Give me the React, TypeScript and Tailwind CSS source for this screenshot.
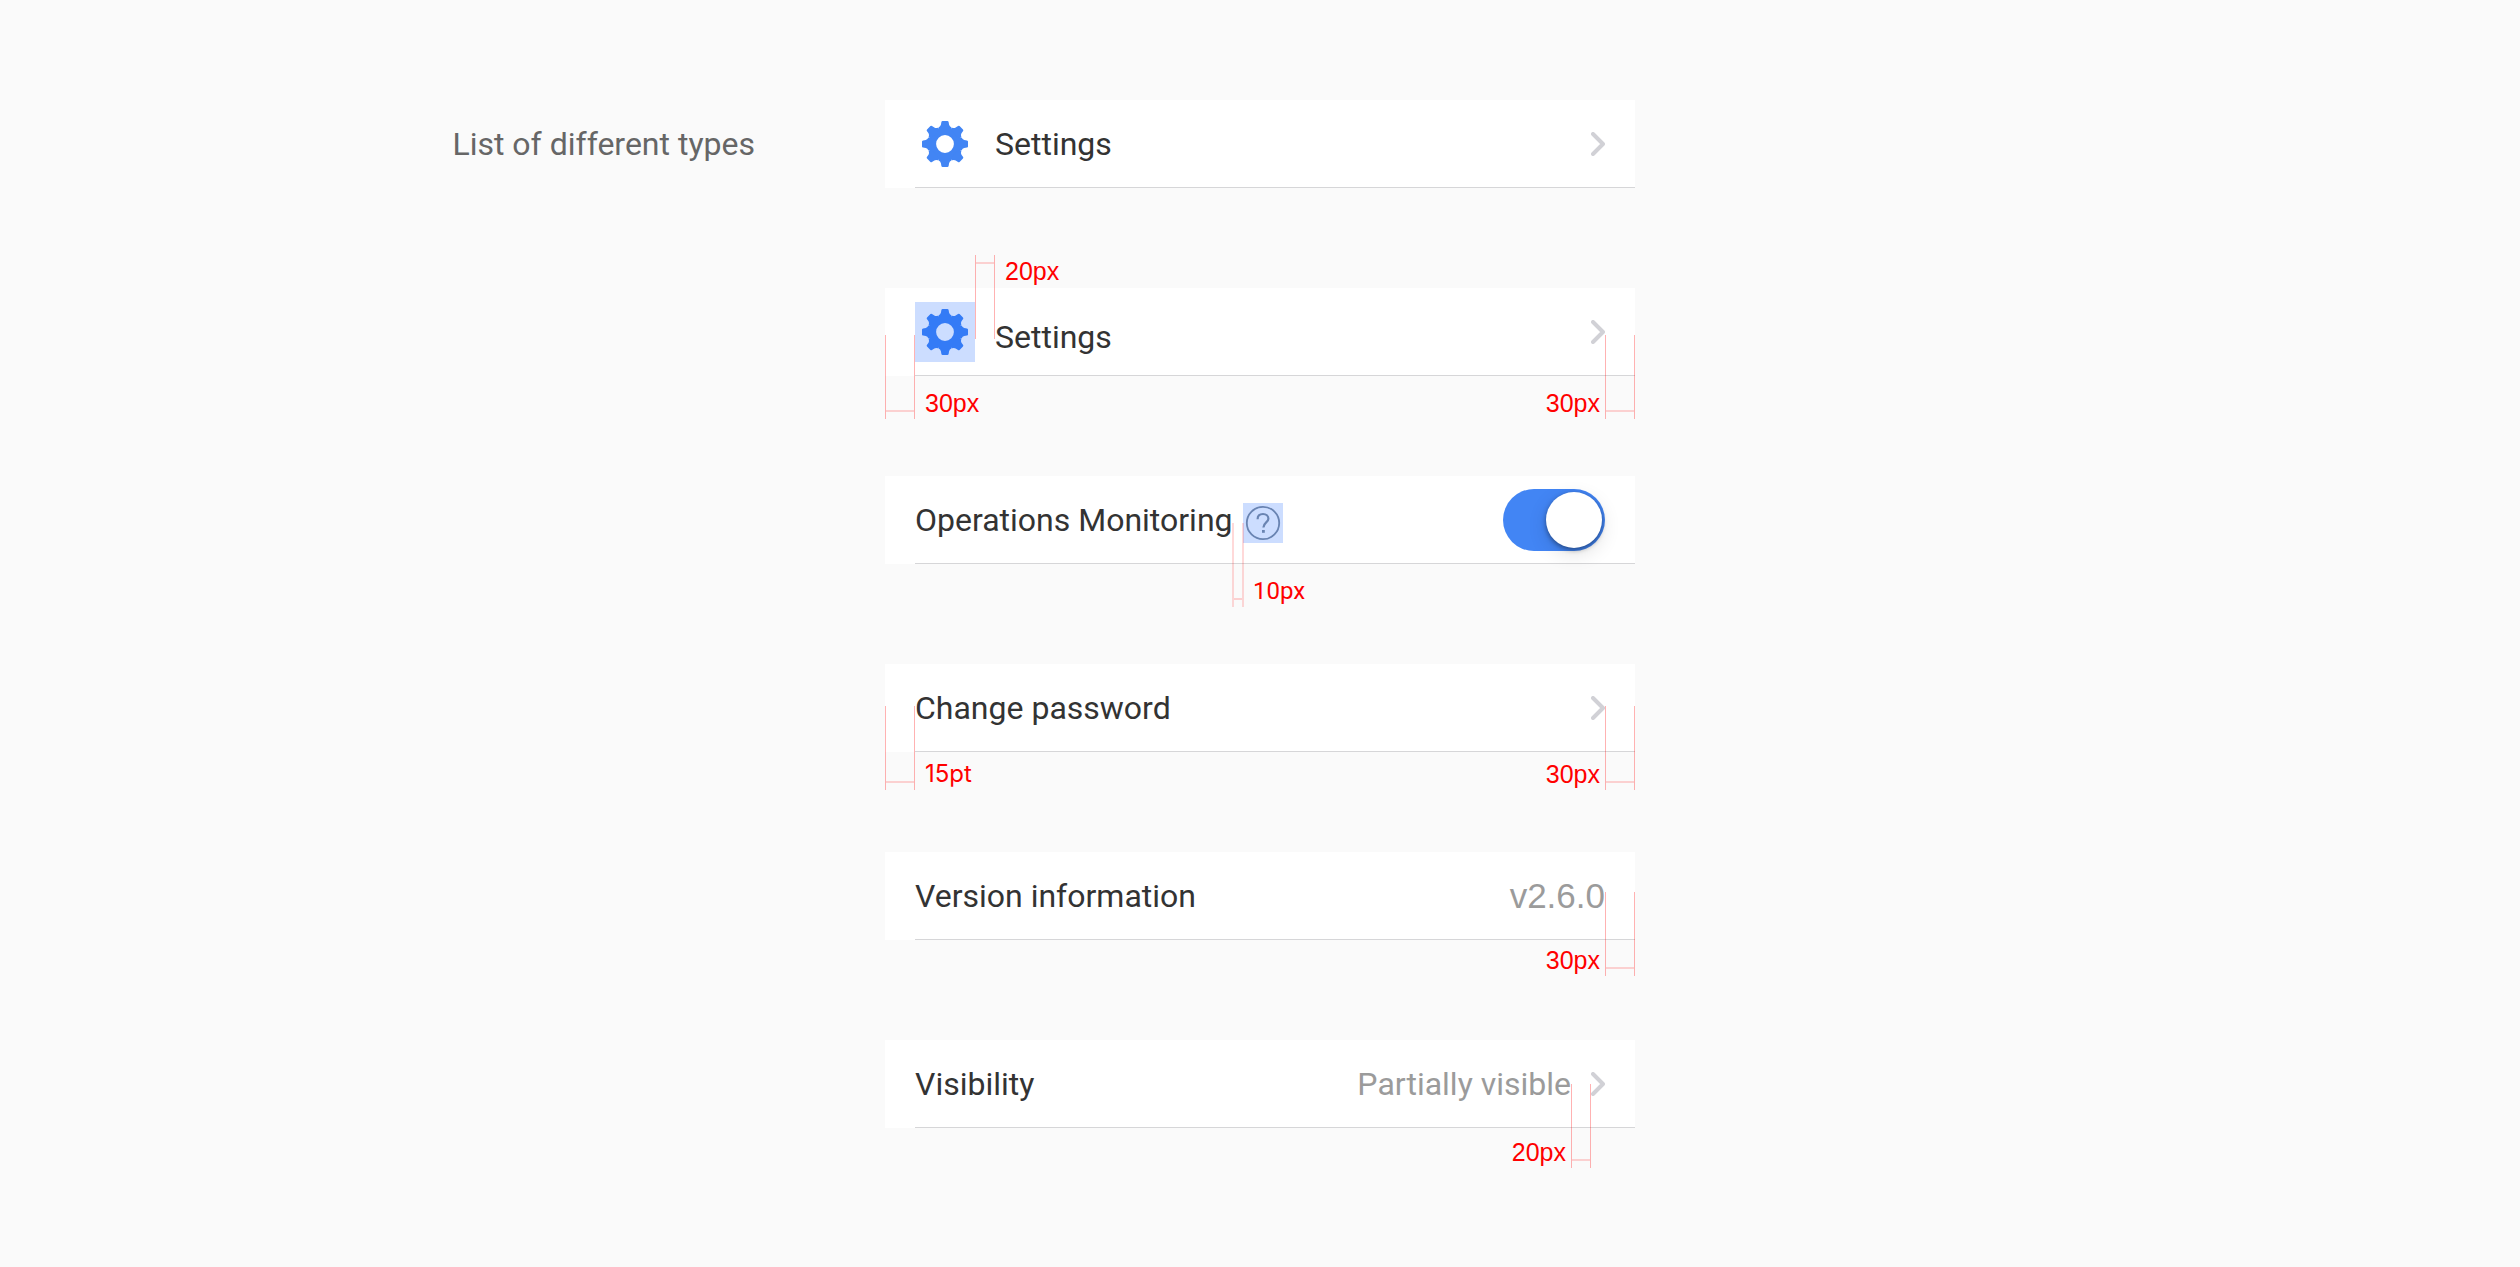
import { useState, type ReactNode } from 'react';

const TOOTH_ANGLES = [0, 45, 90, 135, 180, 225, 270, 315];

function GearIcon() {
  return (
    <svg viewBox="-30 -30 60 60" className="block size-[60px] text-[#4285f4]" fill="currentColor" aria-hidden="true">
      <circle r="12.8" fill="none" stroke="currentColor" strokeWidth="7.8" />
      {TOOTH_ANGLES.map((angle) => (
        <path
          key={angle}
          transform={`rotate(${angle})`}
          d="M-2.4 -23H2.4Q3.4 -23 3.6 -22L4.1 -19.2Q4.5 -17.4 6.5 -16.6L6.3 -14H-6.3L-6.5 -16.6Q-4.5 -17.4 -4.1 -19.2L-3.6 -22Q-3.4 -23 -2.4 -23Z"
        />
      ))}
    </svg>
  );
}

function Chevron() {
  return (
    <svg viewBox="0 0 14 24" className="block h-6 w-3.5 shrink-0" fill="none" aria-hidden="true">
      <path d="M2 2L12 12L2 22" stroke="#d1d1d6" strokeWidth="4" strokeLinecap="round" strokeLinejoin="round" />
    </svg>
  );
}

function HelpIcon() {
  return (
    <svg viewBox="0 0 40 40" className="block size-10" fill="none" stroke="#84909f" aria-hidden="true">
      <circle cx="20" cy="20" r="16.2" strokeWidth="1.8" />
      <path d="M14.6 16.2C14.6 12.9 16.9 11 20 11C23.1 11 25.4 12.9 25.4 15.7C25.4 19.4 20.4 19.6 20.4 24.6" strokeWidth="2.2" />
      <path d="M20.4 27V29.8" strokeWidth="2.8" />
    </svg>
  );
}

/* Blue tint that marks the bounds of an icon */
function Bounds({ children }: { children: ReactNode }) {
  return (
    <span className="relative block shrink-0">
      {children}
      <span className="absolute inset-0 bg-[#0055ff]/20" />
    </span>
  );
}

type MeasureProps = {
  place: string;
  label: string;
  side: 'left' | 'right';
  font?: string;
  line?: string;
  top?: boolean;
};

function Measure({
  place,
  label,
  side,
  font = 'font-["Liberation_Sans",sans-serif] text-[25px]',
  line = 'border-x border-[#ff0000]/30',
  top = false,
}: MeasureProps) {
  return (
    <div className={`pointer-events-none absolute h-[84px] ${line} ${place}`}>
      <span className={`absolute inset-x-0 h-0.5 bg-[#ff0000]/17 ${top ? 'top-[7px]' : 'bottom-[7px]'}`} />
      <span
        className={`absolute leading-6 whitespace-nowrap text-[#ff0000] ${font} ${top ? 'top-1' : 'bottom-1'} ${
          side === 'right' ? 'left-full pl-[11px]' : 'right-full pr-1.5'
        }`}
      >
        {label}
      </span>
    </div>
  );
}

function Row({ children, marks }: { children: ReactNode; marks?: ReactNode }) {
  return (
    <li className="relative bg-white pl-[30px]">
      <div className="flex h-[88px] items-center border-b border-[#d6d6d8] pr-[30px] leading-[50px] text-[#333333]">{children}</div>
      {marks}
    </li>
  );
}

const LINK = 'flex flex-1 items-center justify-between text-left';

export default function App() {
  const [monitoring, setMonitoring] = useState(true);
  return (
    <main className="grid min-h-screen grid-cols-[1fr_minmax(0,750px)_1fr] items-start bg-[#fafafa] py-[100px] font-[Roboto,sans-serif] text-[32px]">
      <h1 className="pr-[130px] text-right leading-[88px] font-normal whitespace-nowrap text-[#666666]">List of different types</h1>
      <ul className="flex flex-col gap-[100px]">
        <Row>
          <a href="#settings" className={LINK}>
            <span className="flex items-center gap-5">
              <GearIcon />
              Settings
            </span>
            <Chevron />
          </a>
        </Row>
        <Row
          marks={
            <>
              <Measure place="-top-[33px] left-[90px] w-5" label="20px" side="right" top />
              <Measure place="top-[47px] left-0 w-[30px]" label="30px" side="right" />
              <Measure place="top-[47px] right-0 w-[30px]" label="30px" side="left" />
            </>
          }
        >
          <a href="#settings-layout" className={LINK}>
            <span className="flex items-end gap-5">
              <Bounds>
                <GearIcon />
              </Bounds>
              Settings
            </span>
            <Chevron />
          </a>
        </Row>
        <Row
          marks={
            <Measure
              place="top-[47px] left-[347px] w-3"
              label="10px"
              side="right"
              font="font-[Roboto,sans-serif] text-2xl"
              line="border-x-2 border-[#ff0000]/15"
            />
          }
        >
          <label htmlFor="monitoring">Operations Monitoring</label>
          <button type="button" aria-label="About operations monitoring" className="mt-1.5 ml-2.5">
            <Bounds>
              <HelpIcon />
            </Bounds>
          </button>
          <span className="relative ml-auto block h-[62px] w-[102px]">
            <input
              id="monitoring"
              type="checkbox"
              role="switch"
              checked={monitoring}
              onChange={(e) => setMonitoring(e.target.checked)}
              className="peer block size-full appearance-none rounded-full bg-[#d1d1d6] checked:bg-[#4285f4]"
            />
            <span className="pointer-events-none absolute top-[3px] left-[3px] size-14 rounded-full bg-white shadow-[0_2px_5px_rgba(0,0,0,0.4),0_6px_20px_rgba(0,0,0,0.12)] peer-checked:left-[43px]" />
          </span>
        </Row>
        <Row
          marks={
            <>
              <Measure place="top-[42px] left-0 w-[30px]" label="15pt" side="right" font="font-[Inter,sans-serif] text-2xl" />
              <Measure place="top-[42px] right-0 w-[30px]" label="30px" side="left" />
            </>
          }
        >
          <a href="#password" className={LINK}>
            Change password
            <Chevron />
          </a>
        </Row>
        <Row marks={<Measure place="top-10 right-0 w-[30px]" label="30px" side="left" />}>
          <span className="flex-1">Version information</span>
          <span className='font-["Liberation_Sans",sans-serif] text-[35px] text-[#9b9b9b]'>v2.6.0</span>
        </Row>
        <Row marks={<Measure place="top-11 right-11 w-5" label="20px" side="left" />}>
          <a href="#visibility" className={LINK}>
            Visibility
            <span className="flex items-center gap-5 text-[#9b9b9b]">
              Partially visible
              <Chevron />
            </span>
          </a>
        </Row>
      </ul>
    </main>
  );
}
